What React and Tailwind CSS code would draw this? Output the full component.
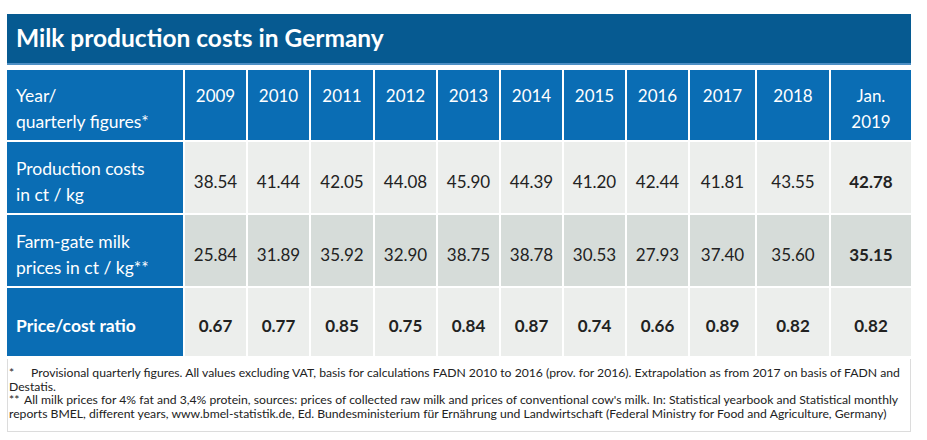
const years = ['2009', '2010', '2011', '2012', '2013', '2014', '2015', '2016', '2017', '2018'];

const rows = [
  {
    label: ['Production costs', 'in ct / kg'],
    values: ['38.54', '41.44', '42.05', '44.08', '45.90', '44.39', '41.20', '42.44', '41.81', '43.55', '42.78'],
    bg: 'bg-[#eceeec]',
    bold: false,
  },
  {
    label: ['Farm-gate milk', 'prices in ct / kg**'],
    values: ['25.84', '31.89', '35.92', '32.90', '38.75', '38.78', '30.53', '27.93', '37.40', '35.60', '35.15'],
    bg: 'bg-[#d6dcd9]',
    bold: false,
  },
  {
    label: ['Price/cost ratio'],
    values: ['0.67', '0.77', '0.85', '0.75', '0.84', '0.87', '0.74', '0.66', '0.89', '0.82', '0.82'],
    bg: 'bg-[#eceeec]',
    bold: true,
  },
];

const App = () => {
  return (
    <div className="w-[927px] h-[440px] bg-white pt-[14px] pl-[7px] font-['Lato','Liberation_Sans',sans-serif]">
      <div className="w-[904px]">
        <div className="h-[51px] bg-[#065a91] border-b-2 border-[#4d8fc4] flex items-center pl-[9px]">
          <h1 className="text-white font-bold text-[24.5px] leading-none">Milk production costs in Germany</h1>
        </div>

        <div className="mt-[5px] grid grid-cols-[176px_61px_61px_62px_61px_61px_61px_61px_61px_65px_72px_80px] grid-rows-[70px_71px_71px_68px] gap-[2px] bg-white">
          <div className="bg-[#0a6db4] text-white text-[17.5px] leading-[26px] pl-[9px] pt-[13px]">
            <div>Year/</div>
            <div>quarterly figures*</div>
          </div>
          {years.map((y) => (
            <div key={y} className="bg-[#0a6db4] text-white text-[17px] leading-[26px] text-center pt-[13px]">
              {y}
            </div>
          ))}
          <div className="bg-[#0a6db4] text-white text-[17px] leading-[26px] text-center pt-[13px]">
            <div>Jan.</div>
            <div>2019</div>
          </div>

          {rows.map((row) => (
            <>
              <div key={row.label[0]} className={`bg-[#0a6db4] text-white text-[17.5px] leading-[26px] pl-[9px] pt-[8px] flex flex-col justify-center ${row.bold ? 'font-bold' : ''}`}>
                {row.label.map((l) => (
                  <div key={l}>{l}</div>
                ))}
              </div>
              {row.values.map((v, i) => (
                <div
                  key={row.label[0] + i}
                  className={`${row.bg} text-[#222] text-[17px] pt-[8px] flex items-center justify-center ${row.bold || i === 10 ? 'font-bold' : ''}`}
                >
                  {v}
                </div>
              ))}
            </>
          ))}
        </div>

        <div className="mt-[3px] border border-t-0 border-[#dcdcdc] h-[73px] pl-[1px] pt-[7px] text-[12.2px] leading-[13.5px] text-[#222] whitespace-nowrap">
          <div className="flex">
            <span className="w-[22px] shrink-0">*</span>
            <span>Provisional quarterly figures. All values excluding VAT, basis for calculations FADN 2010 to 2016 (prov. for 2016). Extrapolation as from 2017 on basis of FADN and</span>
          </div>
          <div>Destatis.</div>
          <div className="flex">
            <span className="w-[15px] shrink-0">**</span>
            <span>All milk prices for 4% fat and 3,4% protein, sources: prices of collected raw milk and prices of conventional cow's milk. In: Statistical yearbook and Statistical monthly</span>
          </div>
          <div>reports BMEL, different years, www.bmel-statistik.de, Ed. Bundesministerium für Ernährung und Landwirtschaft (Federal Ministry for Food and Agriculture, Germany)</div>
        </div>
      </div>
    </div>
  );
};

export default App;
